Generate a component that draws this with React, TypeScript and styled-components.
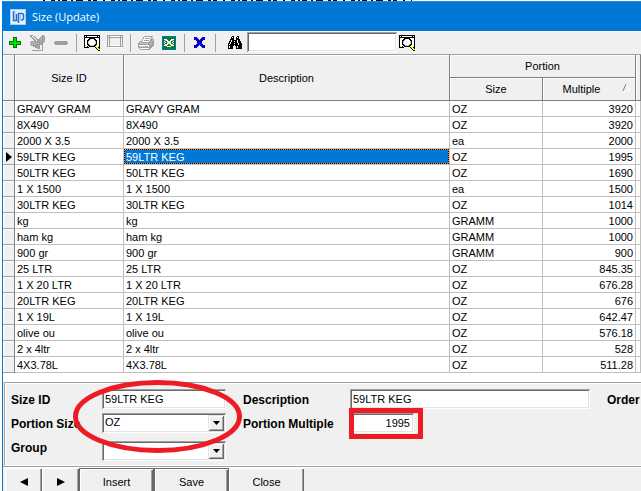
import React from 'react';
import styled, { createGlobalStyle, css } from 'styled-components';

const GlobalStyle = createGlobalStyle`
  * { box-sizing: border-box; }
  html, body { margin: 0; padding: 0; background: #fff; }
  body, button, input, select {
    font-family: "Liberation Sans", Arial, sans-serif;
    font-size: 11px;
    color: #000;
  }
`;

const face = '#f0f0f0';
const accent = '#0078d7';
const grey = '#a0a0a0';

const Screen = styled.div`
  height: 100vh;
  overflow: hidden;
  padding-left: 2px;
`;

const Backdrop = styled.svg`
  display: block;
  width: 100%;
  height: 1px;
`;

const Window = styled.main`
  border-left: 1px solid ${accent};
  background: ${face};
`;

const TitleBar = styled.header`
  display: flex;
  align-items: center;
  gap: 6px;
  height: 30px;
  padding-left: 7px;
  border-top: 1px solid #2f86cc;
  background: ${accent};
`;

const Title = styled.h1`
  margin: 0;
  font: 400 11px/16px "Open Sans", sans-serif;
  color: #fff;
`;

const Toolbar = styled.div`
  display: flex;
  align-items: flex-start;
  height: 24px;
  padding-left: 4px;
  border-top: 1px solid #fff;
  border-bottom: 1px solid ${grey};
`;

const ToolButton = styled.button`
  display: flex;
  width: 23px;
  height: 22px;
  padding: 3px 0 0;
  border: 0;
  background: none;
`;

const FindButton = styled(ToolButton)`
  width: 24px;
  padding-left: 4px;
`;

const Separator = styled.span`
  width: 8px;
  height: 18px;
  margin-top: 2px;
  border-left: 1px solid ${grey};
`;

const sunken = css`
  border: 0;
  border-radius: 0;
  outline: 0;
  background: #fff;
  box-shadow: inset 1px 1px ${grey}, inset -1px -1px #fff, inset 2px 2px #696969, inset -2px -2px #e3e3e3;
`;

const SearchInput = styled.input`
  ${sunken}
  width: 150px;
  height: 20px;
  margin-right: 2px;
  padding: 0 4px;
`;

const GridPane = styled.section`
  padding-bottom: 9px;
  background: #fff;
`;

const Table = styled.table`
  width: 100%;
  table-layout: fixed;
  border-collapse: separate;
  border-spacing: 0;
`;

const Col = styled.col<{ $w?: number }>`
  ${p => p.$w && css`width: ${p.$w}px;`}
`;

const HeadCell = styled.th<{ $sorted?: boolean }>`
  position: relative;
  height: 23px;
  padding: 0 ${p => (p.$sorted ? 15 : 0)}px 0 0;
  border-right: 1px solid #808080;
  border-bottom: 1px solid #808080;
  background: ${face};
  box-shadow: inset 1px 1px #fff;
  font-weight: 400;
  line-height: 14px;
`;

const SortMark = styled.svg`
  position: absolute;
  right: 4px;
  top: 6px;
`;

const Marker = styled.td`
  height: 16px;
  padding: 0 0 0 3px;
  border-right: 1px solid #808080;
  border-bottom: 1px solid ${grey};
  background: ${face};
  box-shadow: inset 1px 1px #fff;
  line-height: 0;
`;

const Cell = styled.td<{ $right?: boolean }>`
  height: 16px;
  padding: 0;
  border-right: 1px solid #c0c0c0;
  border-bottom: 1px solid #c0c0c0;
  text-align: ${p => (p.$right ? 'right' : 'left')};
`;

const Value = styled.div<{ $selected?: boolean }>`
  height: 15px;
  padding: 0 2px;
  line-height: 16px;
  white-space: nowrap;
  ${p => p.$selected && css`
    background: ${accent};
    color: #fff;
    box-shadow: inset 0 0 0 1px #ff8728;
    outline: 1px dotted #000;
    outline-offset: -1px;
  `}
`;

const Form = styled.form`
  position: relative;
  display: grid;
  grid-template-columns: 91px 124px 17px 107px minmax(120px, 240px) 17px 1fr;
  grid-template-rows: repeat(3, 24px);
  height: 84px;
  margin-left: 1px;
  padding: 6px 0 0 6px;
  border-top: 1px solid ${grey};
  border-left: 1px solid ${grey};
  border-bottom: 1px solid #fff;
  box-shadow: inset 1px 1px #fff;
`;

const Label = styled.label<{ $col: number }>`
  grid-column: ${p => p.$col};
  font-size: 12px;
  font-weight: 700;
  line-height: 22px;
  white-space: nowrap;
`;

const Field = styled.input<{ $col: number }>`
  ${sunken}
  grid-column: ${p => p.$col};
  width: 100%;
  height: 20px;
  padding: 0 4px 0 3px;
`;

const NumberField = styled(Field)`
  width: 64px;
  text-align: right;
`;

const Combo = styled.span<{ $end?: boolean }>`
  position: relative;
  display: block;
  height: 20px;
  grid-column: 2;
  align-self: ${p => (p.$end ? 'end' : 'start')};
`;

const Select = styled.select`
  ${sunken}
  appearance: none;
  width: 100%;
  height: 20px;
  padding: 0 20px 2px 3px;
`;

const DropArrow = styled.span`
  position: absolute;
  top: 2px;
  right: 2px;
  display: flex;
  align-items: center;
  justify-content: center;
  width: 16px;
  height: 16px;
  background: ${face};
  box-shadow: inset 1px 1px #e3e3e3, inset -1px -1px #696969, inset 2px 2px #fff, inset -2px -2px ${grey};
  pointer-events: none;
`;

const Annotation = styled.svg`
  position: absolute;
  left: 65px;
  top: -4px;
  pointer-events: none;
`;

const ButtonBar = styled.footer`
  display: flex;
  height: 26px;
  padding: 1px 0 0 2px;
  border-top: 1px solid ${grey};
  box-shadow: inset 0 1px #fff;
`;

const PushButton = styled.button<{ $wide?: boolean; $framed?: boolean }>`
  display: flex;
  align-items: center;
  justify-content: center;
  width: ${p => (p.$wide ? 75 : 37)}px;
  height: 28px;
  padding: 0;
  border: 0;
  background: ${face};
  box-shadow: inset 1px 1px #fff, inset -1px -1px #696969, inset -2px -2px ${grey};
  ${p => p.$framed && css`
    box-shadow: inset 0 0 0 1px #696969, inset 2px 2px #fff, inset -2px -2px #696969, inset -3px -3px ${grey};
  `}
`;

const palette: Record<string, string> = {
  k: '#000000', w: '#ffffff', g: '#a0a0a0', l: '#d4d4d4', y: '#ffff00', b: '#0000d8',
  n: '#000080', e: '#00e000', d: '#007800', c: '#0070c0', t: '#1f8040', s: '#c8c8c8',
};

function PixelIcon({ rows }: { rows: string[] }) {
  return (
    <svg width="16" height="16" viewBox="0 0 16 16" shapeRendering="crispEdges" aria-hidden="true">
      {rows.flatMap((row, y) =>
        [...row].map((ch, x) =>
          palette[ch] ? <rect key={`${x}-${y}`} x={x} y={y} width="1" height="1" fill={palette[ch]} /> : null,
        ),
      )}
    </svg>
  );
}

const addIcon = [
  '', '',
  '......dddd',
  '......deed',
  '......deed',
  '......deed',
  '..dddddeeddddd',
  '..deeeeeeeeeed',
  '..deeeeeeeeeed',
  '..dddddeeddddd',
  '......deed',
  '......deed',
  '......dddd',
];

const editIcon = [
  'ggg.........gg',
  'ggwgg......gggg',
  '.ggwgg....gsggg',
  '..ggwgg..ggggsg',
  '...ggwggggsgggg',
  '....ggwggggggsg',
  '.gggggggggsgggg',
  'ggsgsggggggggg',
  '.gggggsgsgggg',
  'ggsgsgggggggg',
  '.ggggggggg..g',
  '...ggggggg..g',
  '.....ggggg..g',
  '.......ggg..g',
  '............g',
  '..ggggggggggg',
];

const removeIcon = ['', '', '', '', '', '', '..gggggggggggg', '.gggggggggggggg', '.gggggggggggggg', '..gggggggggggg'];

const browseIcon = [
  'kkkkkkkkkkkkkkkk',
  'kwkwwwwwwwwwwkwk',
  'kkkkkkkkkkkkkkkk',
  'kwwwwkkkkkkwwwwk',
  'kwwwkkswwwkkwwwk',
  'kwwkkswwwwwkkwwk',
  'kwwkswwwwwwskwwk',
  'kwwkswwwwwwskwwk',
  'kwwkswwwwwwskwwk',
  'kwwkkswwwwskkwwk',
  'kwwwkksssskkwwwk',
  'kywkwkkkkkkyywyk',
  'kkkkk......kyykk',
  '............kyyk',
  '.............kyy',
  '..............kk',
];

const formIcon = [
  'gggggggggggggggg',
  'gwgwwwwwwwwwwgwg',
  'gggggggggggggggg',
  'g.g..........g.g',
  'g.g..........g.g',
  'g.g..........g.g',
  'g.g..........g.g',
  'g.g..........g.g',
  'g.g..........g.g',
  'g.g..........g.g',
  'gwgwwwwwwwwwwgwg',
  'gggggggggggggggg',
  '.wwwwwwwwwwwwwww',
];

const printIcon = [
  '',
  '......ggggggggg',
  '.....gwwwwwwwg',
  '.....gwgggggwgg',
  '....gwwwwwwwggsg',
  '....gwgggggwggsg',
  '..ggwwwwwwwggsgg',
  '.gsgggggggggsggg',
  'ggssssssssggsggg',
  'gggggggggggggsgg',
  'gwwwwwwwwwwggggg',
  'gsssssssggwgggg',
  'ggggggggggggggw',
  '.gwwwwwwwwwggw',
  '..ggggggggggw',
];

const exportIcon = [
  '',
  '.cccccccccccccc',
  '.ctdtdtdtdtdtdc',
  '.cdtdtdtdtdtdtc',
  '.ctwwwtdtdwwwdc',
  '.cdtswwtdwwstdc',
  '.ctwtdwwwwdtwdc',
  '.cdtwtswwstwtdc',
  '.ctwtdwwwwdtwdc',
  '.cdtswwtdwwstdc',
  '.ctwwwtdtdwwwdc',
  '.cdtdtwwwwtdtdc',
  '.ctdtdtdtdtdtdc',
  '.cdtdtdtdtdtdtc',
  '.cccccccccccccc',
];

const deleteIcon = [
  '', '',
  '..nbb.....bbn',
  '..bbbb...bbbb',
  '..nbbbb.bbbbn',
  '....bbbbbbb',
  '.....bbbbb',
  '.....nbbbn',
  '.....bbbbb',
  '....bbbbbbb',
  '..nbbbb.bbbbn',
  '..bbbb...bbbb',
  '..nbb.....bbn',
];

const findIcon = [
  '',
  '.....kk...kk',
  '....kwk..kwk',
  '....kkk..kkk',
  '...kkkk..kkkk',
  '...kwkkkkkwkk',
  '..kkwkkwkkwkkk',
  '..kwkkkkkkwkkk',
  '.kkwkkkwkkkwkkk',
  '.kwkkkkkkkkwkkk',
  '.kkkkkk.kkkkkkk',
  '.kwkkk...kwkkkk',
  '.kwkkk...kwkkkk',
  '.kkkkk...kkkkkk',
];

function Logo() {
  return (
    <svg width="16" height="16" viewBox="0 0 16 16" aria-hidden="true">
      <rect width="16" height="16" fill="#a9cdf5" />
      <rect x="1" y="1" width="14" height="14" fill="#e7f3ff" />
      <path d="M3.5 2v9.5h4M6.5 5v6.5" fill="none" stroke="#236fd0" strokeWidth="1.5" />
      <path d="M8.5 14V4.5h3.5q1.5 0 1.5 2v2.5q0 2-2 2h-1" fill="none" stroke="#236fd0" strokeWidth="1.5" />
      <path d="M5 2v8M10.5 6v4" fill="none" stroke="#8dbcf0" />
    </svg>
  );
}

function Triangle({ points, w, h }: { points: string; w: number; h: number }) {
  return (
    <svg width={w} height={h} viewBox={`0 0 ${w} ${h}`} aria-hidden="true">
      <polygon points={points} fill="#000" />
    </svg>
  );
}

const sizes: [string, string, string][] = [
  ['GRAVY GRAM', 'OZ', '3920'],
  ['8X490', 'OZ', '3920'],
  ['2000 X 3.5', 'ea', '2000'],
  ['59LTR KEG', 'OZ', '1995'],
  ['50LTR KEG', 'OZ', '1690'],
  ['1 X 1500', 'ea', '1500'],
  ['30LTR KEG', 'OZ', '1014'],
  ['kg', 'GRAMM', '1000'],
  ['ham kg', 'GRAMM', '1000'],
  ['900 gr', 'GRAMM', '900'],
  ['25 LTR', 'OZ', '845.35'],
  ['1 X 20 LTR', 'OZ', '676.28'],
  ['20LTR KEG', 'OZ', '676'],
  ['1 X 19L', 'OZ', '642.47'],
  ['olive ou', 'OZ', '576.18'],
  ['2 x 4ltr', 'OZ', '528'],
  ['4X3.78L', 'OZ', '511.28'],
];

const selectedId = '59LTR KEG';

export default function App() {
  return (
    <Screen>
      <GlobalStyle />
      <Backdrop aria-hidden="true">
        <path d="M41 .5H410" stroke="#000" strokeDasharray="2 6 4 3 2 2 5 4 2 3 7 5 3 2 4 6" />
      </Backdrop>
      <Window>
        <TitleBar>
          <Logo />
          <Title>Size (Update)</Title>
        </TitleBar>

        <Toolbar role="toolbar">
          <ToolButton aria-label="Add"><PixelIcon rows={addIcon} /></ToolButton>
          <ToolButton aria-label="Edit" disabled><PixelIcon rows={editIcon} /></ToolButton>
          <ToolButton aria-label="Remove" disabled><PixelIcon rows={removeIcon} /></ToolButton>
          <Separator />
          <ToolButton aria-label="Browse"><PixelIcon rows={browseIcon} /></ToolButton>
          <ToolButton aria-label="Form" disabled><PixelIcon rows={formIcon} /></ToolButton>
          <Separator />
          <ToolButton aria-label="Print" disabled><PixelIcon rows={printIcon} /></ToolButton>
          <ToolButton aria-label="Export"><PixelIcon rows={exportIcon} /></ToolButton>
          <Separator />
          <ToolButton aria-label="Delete"><PixelIcon rows={deleteIcon} /></ToolButton>
          <Separator />
          <FindButton aria-label="Find"><PixelIcon rows={findIcon} /></FindButton>
          <SearchInput aria-label="Search text" />
          <ToolButton aria-label="Search"><PixelIcon rows={browseIcon} /></ToolButton>
        </Toolbar>

        <GridPane>
          <Table>
            <colgroup>
              <Col $w={12} />
              <Col $w={109} />
              <Col />
              <Col $w={93} />
              <Col $w={93} />
              <Col $w={5} />
            </colgroup>
            <thead>
              <tr>
                <HeadCell rowSpan={2} />
                <HeadCell rowSpan={2}>Size ID</HeadCell>
                <HeadCell rowSpan={2}>Description</HeadCell>
                <HeadCell colSpan={2}>Portion</HeadCell>
                <HeadCell rowSpan={2} />
              </tr>
              <tr>
                <HeadCell>Size</HeadCell>
                <HeadCell $sorted>
                  Multiple
                  <SortMark width="9" height="8" viewBox="0 0 9 8" aria-hidden="true">
                    <path d="M4 0L8 7H0" fill="none" stroke="#fff" />
                    <path d="M4 0L1 7" fill="none" stroke="#808080" />
                  </SortMark>
                </HeadCell>
              </tr>
            </thead>
            <tbody>
              {sizes.map(([id, unit, multiple]) => (
                <tr key={id}>
                  <Marker>{id === selectedId && <Triangle w={6} h={10} points="0,0 6,5 0,10" />}</Marker>
                  <Cell><Value>{id}</Value></Cell>
                  <Cell><Value $selected={id === selectedId}>{id}</Value></Cell>
                  <Cell><Value>{unit}</Value></Cell>
                  <Cell $right><Value>{multiple}</Value></Cell>
                  <Cell />
                </tr>
              ))}
            </tbody>
          </Table>
        </GridPane>

        <Form onSubmit={e => e.preventDefault()}>
          <Label $col={1} htmlFor="size-id">Size ID</Label>
          <Field $col={2} id="size-id" defaultValue="59LTR KEG" />
          <Label $col={4} htmlFor="description">Description</Label>
          <Field $col={5} id="description" defaultValue="59LTR KEG" />
          <Label $col={7} as="span">Order</Label>

          <Label $col={1} htmlFor="portion-size">Portion Size</Label>
          <Combo>
            <Select id="portion-size" defaultValue="OZ">
              <option>OZ</option>
              <option>ea</option>
              <option>GRAMM</option>
            </Select>
            <DropArrow><Triangle w={7} h={4} points="0,0 7,0 3.5,4" /></DropArrow>
          </Combo>
          <Label $col={4} htmlFor="portion-multiple">Portion Multiple</Label>
          <NumberField $col={5} id="portion-multiple" defaultValue="1995" />

          <Label $col={1} htmlFor="group">Group</Label>
          <Combo $end>
            <Select id="group" defaultValue="">
              <option value=""></option>
            </Select>
            <DropArrow><Triangle w={7} h={4} points="0,0 7,0 3.5,4" /></DropArrow>
          </Combo>

          <Annotation width="360" height="78" viewBox="0 0 360 78" fill="none" stroke="#ed1c24" strokeWidth="5" aria-hidden="true">
            <ellipse cx="87.5" cy="37.5" rx="82" ry="34" />
            <rect x="281.5" y="31.5" width="69" height="26" />
          </Annotation>
        </Form>

        <ButtonBar>
          <PushButton aria-label="Previous"><Triangle w={8} h={8} points="8,0 8,8 0,4" /></PushButton>
          <PushButton aria-label="Next"><Triangle w={8} h={8} points="0,0 0,8 8,4" /></PushButton>
          <PushButton $wide $framed>Insert</PushButton>
          <PushButton $wide $framed>Save</PushButton>
          <PushButton $wide>Close</PushButton>
        </ButtonBar>
      </Window>
    </Screen>
  );
}
